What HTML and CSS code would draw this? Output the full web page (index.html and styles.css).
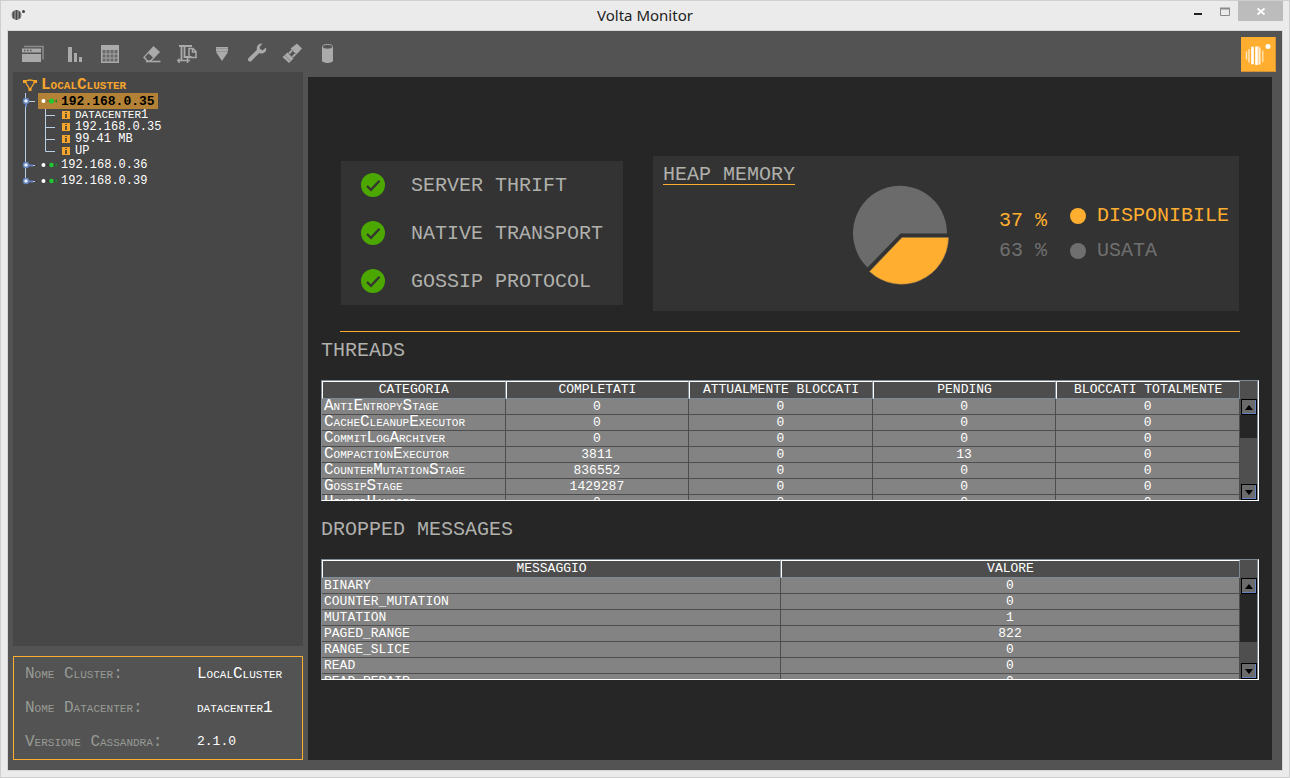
FILE: index.html
```html
<!DOCTYPE html>
<html lang="it">
<head>
<meta charset="utf-8">
<title>Volta Monitor</title>
<link rel="stylesheet" href="styles.css">
</head>
<body>
<div class="window">
  <header class="titlebar">
    <svg class="app-icon" width="15" height="13" viewBox="0 0 15 13" aria-hidden="true">
      <circle cx="5.5" cy="7" r="5" fill="#8a8a8a"/>
      <path d="M2.5 3.5v7M5.5 2v10M8.5 3.5v7" stroke="#4a4a4a" stroke-width="1.4"/>
      <circle cx="12.5" cy="3.5" r="1.5" fill="#444"/>
    </svg>
    <h1 class="window-title">Volta Monitor</h1>
    <div class="window-controls">
      <button class="control" type="button" aria-label="Minimize">
        <svg width="12" height="12" viewBox="0 0 12 12"><path d="M2 9h8" stroke="#222" stroke-width="2"/></svg>
      </button>
      <button class="control" type="button" aria-label="Maximize">
        <svg width="12" height="12" viewBox="0 0 12 12"><path d="M1.5 10.5v-7h9v7z" fill="none" stroke="#8a8a8a"/><path d="M1 3.500h10" stroke="#8a8a8a" stroke-width="2"/></svg>
      </button>
      <button class="control control-close" type="button" aria-label="Close">
        <svg width="12" height="12" viewBox="0 0 12 12"><path d="M2.500 3.500l7 6M9.500 3.500l-7 6" stroke="#fff" stroke-width="1.700"/></svg>
      </button>
    </div>
  </header>

  <div class="frame">
    <div class="toolbar">
      <div class="tool-groups">
        <div class="tool-group">
          <button class="tool" type="button" aria-label="Windows">
            <svg viewBox="0 0 24 24"><path d="M3 4.500h19v13" fill="none" stroke="#8d8d8d" stroke-width="1.500"/><path d="M1 6.500h19v4H1zM1 12h19v8H1z" fill="#aaa"/><path d="M3 8.500h1.500M6 8.500h1.500M9 8.500h1.500" stroke="#535353" stroke-width="1.500"/></svg>
          </button>
        </div>
        <div class="tool-group">
          <button class="tool" type="button" aria-label="Statistics">
            <svg viewBox="0 0 24 24"><path d="M5 5h4v15H5zM11 11h3v9h-3zM16 15h3v5h-3z" fill="#aaa"/></svg>
          </button>
          <button class="tool" type="button" aria-label="Tables">
            <svg viewBox="0 0 24 24"><path d="M3 3h18v18H3z" fill="#aaa"/><path d="M4.500 8h15v11.500h-15z" fill="#6a6a6a"/><path d="M4 12h16M4 16h16M8 8v12M12 8v12M16 8v12" stroke="#aaa" stroke-width=".9"/></svg>
          </button>
        </div>
        <div class="tool-group">
          <button class="tool" type="button" aria-label="Clean up">
            <svg viewBox="0 0 24 24"><path d="M13.500 4l6.500 6-9 9.500H7L3 15.500z" fill="#aaa"/><path d="M5 15l3.500-3.800 4.500 4.300-3 3H7.700z" fill="#555"/><path d="M6 19.500h14.500" stroke="#aaa" stroke-width="1.600"/></svg>
          </button>
          <button class="tool" type="button" aria-label="Compact">
            <svg viewBox="0 0 24 24"><path d="M4 4h13M6.500 4v14M9.500 4v11h7" fill="none" stroke="#aaa" stroke-width="1.800"/><path d="M14 6.500h4l3 3v6h-7z" fill="none" stroke="#aaa" stroke-width="1.500"/><path d="M17.500 6v4h3.500M2 18.500h13M4 16.500v4.500M12.500 14v7" fill="none" stroke="#aaa" stroke-width="1.500"/></svg>
          </button>
          <button class="tool" type="button" aria-label="Flush">
            <svg viewBox="0 0 24 24"><path d="M6 5h12v4l-1 1h1l-6 9-6-9h1L6 9z" fill="#aaa"/><path d="M6 6.500h12M7 9.500h10" stroke="#969696"/></svg>
          </button>
          <button class="tool" type="button" aria-label="Repair">
            <svg viewBox="0 0 24 24"><path d="M5 17.500l9-9" stroke="#aaa" stroke-width="4" stroke-linecap="round"/><path d="M17.500 1.500a5 5 0 0 0-5.500 6.500c1 3.500 4 4 6 3.300a4.800 4.800 0 0 0 3-5.800l-3.200 2.700-2.500-.7-.7-2.500z" fill="#aaa"/></svg>
          </button>
          <button class="tool" type="button" aria-label="Connect">
            <svg viewBox="0 0 24 24"><path d="M17 1.500l5 5-5.500 6-6-6zM7.500 10.500l6 6-4.500 4.500-6.500-6z" fill="#aaa"/><path d="M9 11.500l3-3M12.500 15l3-3" stroke="#aaa" stroke-width="1.800"/><path d="M4.500 13l6 6" stroke="#777" stroke-width=".8"/></svg>
          </button>
          <button class="tool" type="button" aria-label="Storage">
            <svg viewBox="0 0 24 24"><path d="M7 5v13.500c0 3.300 11 3.300 11 0V5z" fill="#aaa"/><ellipse cx="12.500" cy="4.800" rx="5" ry="2.300" fill="#555" stroke="#aaa"/></svg>
          </button>
        </div>
      </div>
      <svg class="logo" viewBox="0 0 35 35" role="img" aria-label="Volta">
        <path d="M0 0h35v35H0z" fill="#ffae2f"/>
        <path d="M34.500 0v34.500H0" fill="none" stroke="#d39335"/>
        <path d="M5.500 14.500v8M8 12v13.500" stroke="#ffe9c6" stroke-width="1.400"/>
        <path d="M11.500 9.800v17.500M15.500 9.500v18.500" stroke="#fff" stroke-width="2.600"/>
        <path d="M19 11v16.500M21.800 13.500v11.500" stroke="#ffe0ad" stroke-width="1.500"/>
        <path d="M18 9.500v18" stroke="#fff" stroke-width="1"/>
        <circle cx="27" cy="9.500" r="2.500" fill="#fff"/>
      </svg>
    </div>

    <div class="workspace">
      <aside class="sidebar">
        <nav class="tree" aria-label="Cluster">
          <div class="tree-root">
            <svg width="16" height="14" viewBox="0 0 16 14" aria-hidden="true"><path d="M3 3.500Q8 .5 13 3.500L8 11.500z" fill="none" stroke="#f5a52c" stroke-width="1.300"/><path d="M1 2h3.500v3H1zM11.500 2H15v3h-3.500zM6.500 10h3v3h-3z" fill="#f5a52c"/></svg>
            <span>LocalCluster</span>
          </div>
          <ul class="tree-list">
            <li>
              <div class="node">
                <svg class="joint" width="16" height="16" viewBox="0 0 16 16"><path d="M3.500 0v16M4 8.500h9" stroke="#b8cfe5"/><path d="M4 8v6" stroke="#6382bf" stroke-width="2"/><circle cx="4" cy="8" r="2.500" fill="#e8f0fa" stroke="#6382bf" stroke-width="1.500"/></svg>
                <a class="node-label selected" href="#n35"><svg class="status" width="17" height="8" viewBox="0 0 17 8"><path d="M3 4h11" stroke="#6b6434"/><circle cx="2.500" cy="4" r="2" fill="#fff"/><circle cx="10.500" cy="4" r="2.600" fill="#20c832"/><path d="M16 2v4l-2-2z" fill="#168c20"/></svg>192.168.0.35</a>
              </div>
              <ul class="tree-list details">
                <li class="leaf"><svg width="40" height="12" viewBox="0 0 40 12"><path d="M3.500 0v12M23.500 0v12M24 6.500h9" stroke="#b8cfe5"/></svg><svg width="8" height="8" viewBox="0 0 8 8"><path d="M0 0h8v8H0z" fill="#f5a52c"/><path d="M4 1v1M4 3v4" stroke="#333" stroke-width="1.500"/></svg><span class="small-caps">datacenter<span class="digit">1</span></span></li>
                <li class="leaf"><svg width="40" height="12" viewBox="0 0 40 12"><path d="M3.500 0v12M23.500 0v12M24 6.500h9" stroke="#b8cfe5"/></svg><svg width="8" height="8" viewBox="0 0 8 8"><path d="M0 0h8v8H0z" fill="#f5a52c"/><path d="M4 1v1M4 3v4" stroke="#333" stroke-width="1.500"/></svg><span class="value">192.168.0.35</span></li>
                <li class="leaf"><svg width="40" height="12" viewBox="0 0 40 12"><path d="M3.500 0v12M23.500 0v12M24 6.500h9" stroke="#b8cfe5"/></svg><svg width="8" height="8" viewBox="0 0 8 8"><path d="M0 0h8v8H0z" fill="#f5a52c"/><path d="M4 1v1M4 3v4" stroke="#333" stroke-width="1.500"/></svg><span class="value">99.41 MB</span></li>
                <li class="leaf"><svg width="40" height="12" viewBox="0 0 40 12"><path d="M3.500 0v12M23.500 0v6.500h9.500" fill="none" stroke="#b8cfe5"/></svg><svg width="8" height="8" viewBox="0 0 8 8"><path d="M0 0h8v8H0z" fill="#f5a52c"/><path d="M4 1v1M4 3v4" stroke="#333" stroke-width="1.500"/></svg><span class="value">UP</span></li>
              </ul>
            </li>
            <li class="node">
              <svg class="joint" width="16" height="16" viewBox="0 0 16 16"><path d="M3.500 0v16M4 8.500h9" stroke="#b8cfe5"/><path d="M4 8.500h7" stroke="#6382bf" stroke-width="2"/><circle cx="4" cy="8" r="2.500" fill="#e8f0fa" stroke="#6382bf" stroke-width="1.500"/></svg>
              <a class="node-label" href="#n36"><svg class="status" width="17" height="8" viewBox="0 0 17 8"><path d="M3 4h11" stroke="#333"/><circle cx="2.500" cy="4" r="2" fill="#fff"/><circle cx="10.500" cy="4" r="2.300" fill="#20c832"/><path d="M16 2v4l-2-2z" fill="#168c20"/></svg>192.168.0.36</a>
            </li>
            <li class="node">
              <svg class="joint" width="16" height="16" viewBox="0 0 16 16"><path d="M3.500 0v8M4 8.500h9" stroke="#b8cfe5"/><path d="M4 8.500h7" stroke="#6382bf" stroke-width="2"/><circle cx="4" cy="8" r="2.500" fill="#e8f0fa" stroke="#6382bf" stroke-width="1.500"/></svg>
              <a class="node-label" href="#n39"><svg class="status" width="17" height="8" viewBox="0 0 17 8"><path d="M3 4h11" stroke="#333"/><circle cx="2.500" cy="4" r="2" fill="#fff"/><circle cx="10.500" cy="4" r="2.300" fill="#20c832"/><path d="M16 2v4l-2-2z" fill="#168c20"/></svg>192.168.0.39</a>
            </li>
          </ul>
        </nav>
        <dl class="cluster-info">
          <dt>Nome Cluster:</dt><dd>LocalCluster</dd>
          <dt>Nome Datacenter:</dt><dd>datacenter1</dd>
          <dt>Versione Cassandra:</dt><dd class="version">2.1.0</dd>
        </dl>
      </aside>

      <main class="content">
        <div class="summary">
          <ul class="services">
            <li><svg width="24" height="24" viewBox="0 0 24 24"><circle cx="12" cy="12" r="12" fill="#4ca800"/><path d="M6 13l4 3.800 8.500-9" fill="none" stroke="#333" stroke-width="2.300"/></svg>SERVER THRIFT</li>
            <li><svg width="24" height="24" viewBox="0 0 24 24"><circle cx="12" cy="12" r="12" fill="#4ca800"/><path d="M6 13l4 3.800 8.500-9" fill="none" stroke="#333" stroke-width="2.300"/></svg>NATIVE TRANSPORT</li>
            <li><svg width="24" height="24" viewBox="0 0 24 24"><circle cx="12" cy="12" r="12" fill="#4ca800"/><path d="M6 13l4 3.800 8.500-9" fill="none" stroke="#333" stroke-width="2.300"/></svg>GOSSIP PROTOCOL</li>
          </ul>
          <section class="heap">
            <h2 class="heap-title">HEAP MEMORY</h2>
            <svg class="pie" width="102" height="106" viewBox="850 182 102 106" role="img" aria-label="37% disponibile, 63% usata">
              <path d="M900.500 232.500H947A47 47.500 0 1 0 867.500 266.500z" fill="#6b6b6b"/>
              <path d="M902 236.500H948.500A47 47.500 0 0 1 869.500 270.500z" fill="#ffae2f" stroke="#8d7450" stroke-width=".5"/>
            </svg>
            <div class="percents">
              <div class="free">37 %</div>
              <div class="used">63 %</div>
            </div>
            <ul class="legend">
              <li class="free"><span class="dot"></span>DISPONIBILE</li>
              <li class="used"><span class="dot"></span>USATA</li>
            </ul>
          </section>
        </div>

        <section class="section">
          <h2 class="section-title">THREADS</h2>
          <div class="grid-pane">
            <div class="viewport">
              <table class="grid">
                <thead><tr><th>CATEGORIA</th><th>COMPLETATI</th><th>ATTUALMENTE BLOCCATI</th><th>PENDING</th><th>BLOCCATI TOTALMENTE</th></tr></thead>
                <tbody>
                  <tr><td class="name">AntiEntropyStage</td><td>0</td><td>0</td><td>0</td><td>0</td></tr>
                  <tr><td class="name">CacheCleanupExecutor</td><td>0</td><td>0</td><td>0</td><td>0</td></tr>
                  <tr><td class="name">CommitLogArchiver</td><td>0</td><td>0</td><td>0</td><td>0</td></tr>
                  <tr><td class="name">CompactionExecutor</td><td>3811</td><td>0</td><td>13</td><td>0</td></tr>
                  <tr><td class="name">CounterMutationStage</td><td>836552</td><td>0</td><td>0</td><td>0</td></tr>
                  <tr><td class="name">GossipStage</td><td>1429287</td><td>0</td><td>0</td><td>0</td></tr>
                  <tr><td class="name">HintedHandoff</td><td>0</td><td>0</td><td>0</td><td>0</td></tr>
                </tbody>
              </table>
            </div>
            <div class="scrollbar">
              <div class="corner"></div>
              <button type="button" aria-label="Scroll up"><svg width="8" height="5" viewBox="0 0 8 5"><path d="M0 5l4-5 4 5z"/></svg></button>
              <div class="track"><div class="thumb thumb-short"></div></div>
              <button type="button" aria-label="Scroll down"><svg width="8" height="5" viewBox="0 0 8 5"><path d="M0 0l4 5 4-5z"/></svg></button>
            </div>
          </div>
        </section>

        <section class="section">
          <h2 class="section-title">DROPPED MESSAGES</h2>
          <div class="grid-pane">
            <div class="viewport">
              <table class="grid">
                <thead><tr><th>MESSAGGIO</th><th>VALORE</th></tr></thead>
                <tbody>
                  <tr><td class="message">BINARY</td><td>0</td></tr>
                  <tr><td class="message">COUNTER_MUTATION</td><td>0</td></tr>
                  <tr><td class="message">MUTATION</td><td>1</td></tr>
                  <tr><td class="message">PAGED_RANGE</td><td>822</td></tr>
                  <tr><td class="message">RANGE_SLICE</td><td>0</td></tr>
                  <tr><td class="message">READ</td><td>0</td></tr>
                  <tr><td class="message">READ_REPAIR</td><td>0</td></tr>
                </tbody>
              </table>
            </div>
            <div class="scrollbar">
              <div class="corner"></div>
              <button type="button" aria-label="Scroll up"><svg width="8" height="5" viewBox="0 0 8 5"><path d="M0 5l4-5 4 5z"/></svg></button>
              <div class="track"><div class="thumb thumb-long"></div></div>
              <button type="button" aria-label="Scroll down"><svg width="8" height="5" viewBox="0 0 8 5"><path d="M0 0l4 5 4-5z"/></svg></button>
            </div>
          </div>
        </section>
      </main>
    </div>
  </div>
</div>
</body>
</html>
```

FILE: styles.css
```css
* { box-sizing: border-box; }

body {
  margin: 0;
  background: #ebebeb;
  color: #fff;
  font-family: "Liberation Mono", monospace;
  font-size: 13px;
}

ul, dl, dd, h1, h2 { margin: 0; padding: 0; }
ul { list-style: none; }
svg { display: block; flex: none; }
button { margin: 0; padding: 0; border: 0; background: none; }
a { color: inherit; text-decoration: none; }

.window {
  display: flex;
  flex-direction: column;
  min-height: 100vh;
  padding: 0 6px 6px;
  border: 1px solid #cfcfcf;
}

/* Title bar */
.titlebar {
  display: grid;
  grid-template-columns: 1fr auto 1fr;
  align-items: start;
  height: 29px;
}
.app-icon { margin: 7px 0 0 4px; }
.window-title {
  color: #222;
  font: 400 15px/29px "Noto Sans", sans-serif;
}
.window-controls { display: flex; justify-content: flex-end; }
.control {
  display: grid;
  place-items: center;
  width: 27px;
  height: 20px;
}
.control-close { width: 45px; background: #bcbcbc; }

/* Application frame */
.frame {
  display: flex;
  flex: 1;
  flex-direction: column;
  border: 1px solid #d6d6d6;
  background: #535353;
}
.toolbar {
  display: flex;
  align-items: flex-start;
  justify-content: space-between;
  padding: 6px 6px 0 13px;
}
.tool-groups { display: flex; gap: 18px; margin-top: 5px; }
.tool-group { display: flex; gap: 11px; }
.tool, .tool svg { width: 24px; height: 24px; }
.logo { width: 35px; height: 35px; }

.workspace {
  display: grid;
  flex: 1;
  grid-template-columns: 290px minmax(0, 1fr);
  gap: 5px;
  padding: 0 10px 10px 5px;
}
.sidebar { display: flex; flex-direction: column; gap: 10px; }

/* Cluster tree */
.tree {
  flex: 1;
  padding: 5px 9px;
  background: #474747;
}
.tree-root {
  display: flex;
  align-items: center;
  gap: 3px;
  height: 16px;
  color: #f5a52c;
  font-size: 16px;
  font-weight: 700;
  font-variant: small-caps;
}
.node { display: flex; height: 16px; font-size: 12px; }
.node-label {
  display: flex;
  align-items: center;
  gap: 3px;
  padding: 0 3px;
}
.selected {
  background: #b38237;
  color: #000;
  font-size: 13px;
  font-weight: 700;
}
.leaf {
  display: flex;
  align-items: center;
  height: 12px;
  font-size: 12px;
}
.value, .small-caps { margin-left: 5px; }
.small-caps { font-size: 15px; line-height: 12px; font-variant: small-caps; }
.digit { font-size: 12px; }

.cluster-info {
  display: grid;
  grid-template-columns: 172px 1fr;
  padding-left: 11px;
  border: 1px solid #ffae2f;
  font-size: 16px;
  font-variant: small-caps;
  line-height: 34px;
  white-space: nowrap;
}
.cluster-info dt { color: #989b95; }
.cluster-info .version { font-size: 13px; }

/* Main panel */
.content {
  margin-top: 5px;
  padding: 79px 13px 0;
  background: #262626;
}
.summary {
  display: flex;
  align-items: flex-start;
  gap: 30px;
  margin: 0 19px;
  padding: 0 1px 20px;
  border-bottom: 1px solid #ffae2f;
}
.services {
  width: 282px;
  margin-top: 5px;
  background: #333;
  color: #b0b0ac;
  font-size: 20px;
}
.services li {
  display: flex;
  align-items: center;
  gap: 26px;
  height: 48px;
  padding-left: 20px;
}
.heap {
  display: flex;
  flex: 1;
  align-items: flex-start;
  height: 155px;
  padding: 10px;
  background: #333;
  font-size: 20px;
  white-space: nowrap;
}
.heap-title {
  border-bottom: 1px solid #ffae2f;
  color: #b0b0ac;
  font-size: 20px;
  font-weight: 400;
  line-height: 18px;
}
.pie { margin: 17px 47px 0 auto; }
.percents { margin: 40px 23px 0 0; line-height: 30px; }
.legend { margin-top: 32px; line-height: 35px; }
.legend li { display: flex; align-items: center; gap: 11px; }
.dot {
  width: 16px;
  height: 16px;
  border-radius: 50%;
  background: currentColor;
}
.free { color: #ffae2f; }
.used { color: #6f6f6f; }

.section-title {
  color: #b0b0ac;
  font-size: 20px;
  font-weight: 400;
  line-height: 24px;
}
.section { padding-top: 7px; }
.section + .section { padding-top: 17px; }

/* Scrollable grids */
.grid-pane {
  display: flex;
  height: 121px;
  margin-top: 17px;
  border: 1px solid #7d8a97;
  border-right-color: #fff;
  border-bottom-color: #fff;
}
.viewport { flex: 1; overflow: hidden; background: #838383; }
.grid {
  width: 100%;
  border-collapse: separate;
  border-spacing: 0;
  table-layout: fixed;
  text-align: center;
}
.grid th {
  height: 18px;
  padding: 0;
  border: 1px solid #7d8a97;
  border-top-color: #fff;
  border-left-color: #fff;
  background: #4d4d4d;
  font-weight: 400;
  line-height: 16px;
}
.grid td {
  height: 16px;
  padding: 0;
  border: solid #4d4d4d;
  border-width: 0 1px 1px 0;
  line-height: 15px;
  white-space: nowrap;
}
.grid .name, .grid .message { padding-left: 2px; text-align: left; }
.grid .name { font-size: 16px; font-variant: small-caps; }

.scrollbar {
  display: flex;
  flex-direction: column;
  width: 18px;
  border-right: 1px solid #7d8a97;
  background: #4f4f4f;
}
.corner { height: 18px; border-bottom: 1px solid #4d4d4d; }
.scrollbar button {
  display: grid;
  place-items: center;
  height: 16px;
  margin-left: 1px;
  border: 1px solid #000;
  background: #6b6b6b;
  box-shadow: inset -1px -1px #6382bf;
}
.track { flex: 1; }
.thumb { background: #262626; }
.thumb-short { height: 33%; }
.thumb-long { height: 70%; }
```
